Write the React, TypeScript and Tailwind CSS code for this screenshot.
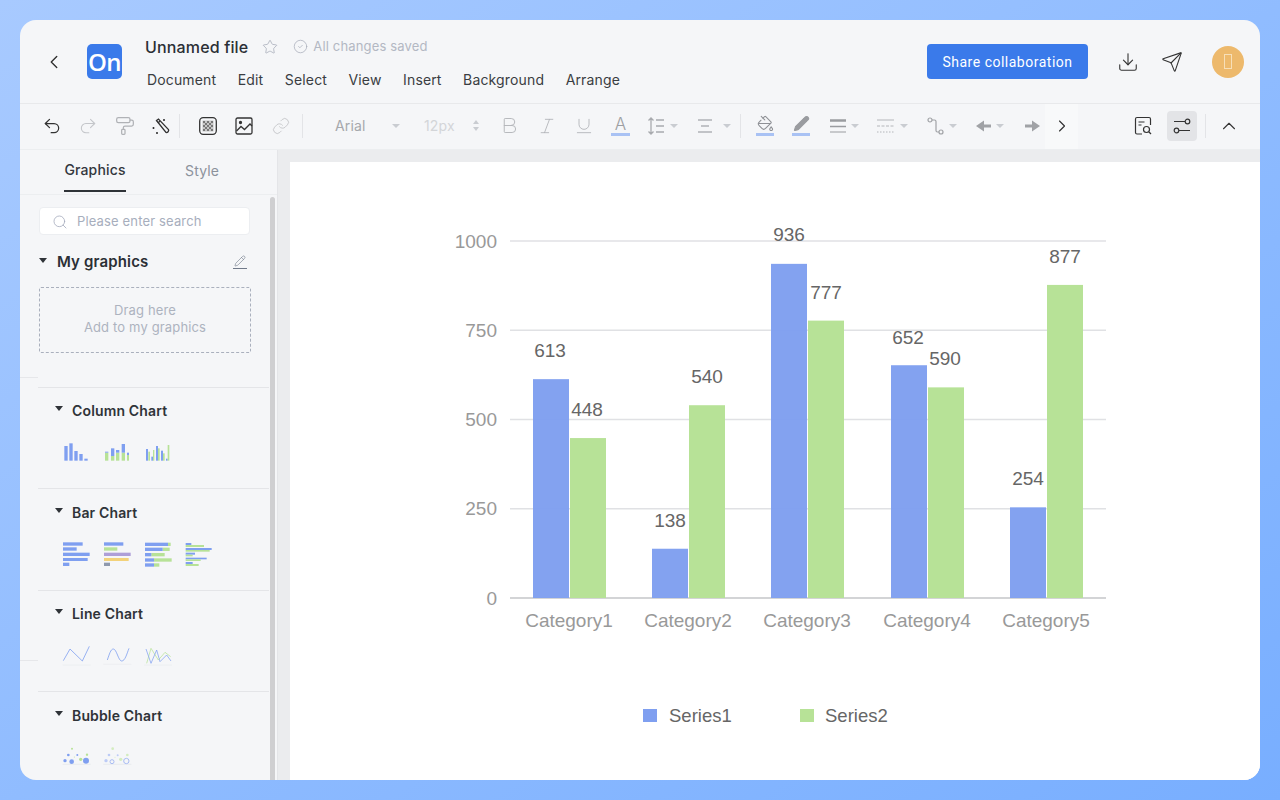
import { ChevronLeft, ChevronRight, ChevronUp, Star, CircleCheck, Download, Send, Undo2, Redo2, PaintRoller, Link, Bold, Italic, Underline, PaintBucket, Search, Pencil } from 'lucide-react'

const BLUE = '#7f9ff0'
const GREEN = '#b7e297'

const DATA = [
  { name: 'Category1', a: 613, b: 448, x: 533, la: [550, 357], lb: [587, 416] },
  { name: 'Category2', a: 138, b: 540, x: 652, la: [670, 527], lb: [707, 383] },
  { name: 'Category3', a: 936, b: 777, x: 771, la: [789, 241], lb: [826, 299] },
  { name: 'Category4', a: 652, b: 590, x: 891, la: [908, 344], lb: [945, 365] },
  { name: 'Category5', a: 254, b: 877, x: 1010, la: [1028, 485], lb: [1065, 263] },
]

const Caret = ({ className = '' }: { className?: string }) => (
  <span className={`block w-0 h-0 border-x-[4px] border-x-transparent border-t-[4px] border-t-[#c9ccd1] ${className}`} />
)

const DarkCaret = ({ className = '' }: { className?: string }) => (
  <span className={`block w-0 h-0 border-x-[4.5px] border-x-transparent border-t-[5px] border-t-[#2f3338] ${className}`} />
)

const Sep = ({ className = '' }: { className?: string }) => <span className={`block w-px h-[24px] bg-[#e3e4e7] ${className}`} />

function Column1() {
  return (
    <svg width="26" height="20" viewBox="39 33 78 60" fill={BLUE}>
      <rect x="43" y="48" width="10" height="44" /><rect x="58" y="40" width="10" height="52" /><rect x="73" y="63" width="10" height="29" /><rect x="88" y="72" width="10" height="20" /><rect x="103" y="86" width="10" height="6" />
    </svg>
  )
}

function Column2() {
  return (
    <svg width="26" height="20" viewBox="159 33 78 60">
      <g fill={GREEN}><rect x="165" y="68" width="10" height="24" /><rect x="183" y="78" width="10" height="14" /><rect x="198" y="68" width="10" height="24" /><rect x="215" y="68" width="10" height="24" /><rect x="231" y="75" width="10" height="17" /></g>
      <g fill={BLUE}><rect x="165" y="65" width="10" height="3" /><rect x="183" y="55" width="10" height="23" /><rect x="198" y="60" width="10" height="8" /><rect x="215" y="42" width="10" height="26" /><rect x="231" y="68" width="10" height="7" /></g>
    </svg>
  )
}

function Column3() {
  return (
    <svg width="26" height="20" viewBox="279 33 78 60" className="overflow-visible">
      <g fill={BLUE}><rect x="288" y="57" width="6" height="35" /><rect x="304" y="80" width="5" height="12" /><rect x="318" y="48" width="6" height="44" /><rect x="333" y="62" width="6" height="30" /><rect x="348" y="86" width="5" height="6" /></g>
      <g fill={GREEN}><rect x="295" y="65" width="5" height="27" /><rect x="309" y="60" width="4" height="32" /><rect x="324" y="55" width="5" height="37" /><rect x="339" y="70" width="5" height="22" /><rect x="353" y="45" width="5" height="47" /></g>
    </svg>
  )
}

function Bar1() {
  return (
    <svg width="26" height="20" viewBox="39 36 78 60" fill={BLUE} className="overflow-visible">
      <rect x="39" y="37" width="59" height="10" /><rect x="39" y="52" width="41" height="10" /><rect x="39" y="68" width="80" height="10" /><rect x="39" y="84" width="74" height="9" /><rect x="39" y="98" width="19" height="10" />
    </svg>
  )
}

function Bar2() {
  return (
    <svg width="26" height="20" viewBox="159 36 78 60" className="overflow-visible">
      <rect x="162" y="37" width="58" height="10" fill={BLUE} /><rect x="162" y="52" width="40" height="10" fill={GREEN} /><rect x="162" y="68" width="80" height="10" fill="#ae9fd8" /><rect x="162" y="84" width="74" height="9" fill="#f3d27a" /><rect x="162" y="98" width="18" height="10" fill="#8f99ad" />
    </svg>
  )
}

function Bar3() {
  return (
    <svg width="26" height="20" viewBox="279 36 78 60" className="overflow-visible">
      <g fill={GREEN}><rect x="354" y="38" width="8" height="10" /><rect x="338" y="53" width="21" height="10" /><rect x="304" y="69" width="40" height="10" /><rect x="312" y="85" width="53" height="10" /><rect x="312" y="100" width="16" height="10" /></g>
      <g fill={BLUE}><rect x="285" y="38" width="69" height="10" /><rect x="285" y="53" width="53" height="10" /><rect x="285" y="69" width="19" height="10" /><rect x="285" y="85" width="27" height="10" /><rect x="285" y="100" width="27" height="10" /></g>
    </svg>
  )
}

function Bar4() {
  return (
    <svg width="26" height="20" viewBox="399 36 78 60" className="overflow-visible">
      <g fill={BLUE}><rect x="407" y="39" width="17" height="6" /><rect x="407" y="54" width="78" height="6" /><rect x="407" y="68" width="28" height="6" /><rect x="407" y="83" width="63" height="5" /><rect x="407" y="96" width="21" height="6" /></g>
      <g fill={GREEN}><rect x="407" y="45" width="55" height="6" /><rect x="407" y="60" width="72" height="5" /><rect x="407" y="74" width="21" height="5" /><rect x="407" y="88" width="45" height="5" /><rect x="407" y="102" width="39" height="6" /></g>
    </svg>
  )
}

function Line1() {
  return (
    <svg width="26" height="20" viewBox="39 27 78 60" fill="none" className="overflow-visible">
      <path d="M38 90h84" stroke="#e9ebee" strokeWidth="2" /><path d="M40 77L60 42L97 78L118 34" stroke={BLUE} strokeWidth="2.4" />
    </svg>
  )
}

function Line2() {
  return (
    <svg width="26" height="20" viewBox="159 27 78 60" fill="none" className="overflow-visible">
      <path d="M160 88h84" stroke="#e9ebee" strokeWidth="2" /><path d="M172 75C178 58 182 42 190 42C200 42 205 78 215 78C225 78 230 58 237 40" stroke={BLUE} strokeWidth="2.4" />
    </svg>
  )
}

function Line3() {
  return (
    <svg width="26" height="20" viewBox="279 27 78 60" fill="none" className="overflow-visible">
      <path d="M282 90h84" stroke="#e9ebee" strokeWidth="2" /><path d="M290 85L303 40L325 75L345 52L362 65" stroke={GREEN} strokeWidth="2.2" /><path d="M288 42L303 85L320 45L330 80L350 60L363 78" stroke={BLUE} strokeWidth="2.2" />
    </svg>
  )
}

function Bubble1() {
  return (
    <svg width="26" height="20" viewBox="39 333 78 60" className="overflow-visible">
      <path d="M38 391h84" stroke="#e3e6ea" strokeWidth="2" />
      <g fill={GREEN}><circle cx="66" cy="344" r="3" /><circle cx="111" cy="362" r="3.5" /><circle cx="92" cy="376" r="5" /><circle cx="73" cy="369" r="1.5" /></g>
      <g fill={BLUE}><circle cx="45" cy="380" r="5" /><circle cx="65" cy="383" r="7" /><circle cx="108" cy="380" r="9" /><circle cx="55" cy="363" r="4" /><circle cx="82" cy="363" r="3" /></g>
    </svg>
  )
}

function Bubble2() {
  return (
    <svg width="26" height="20" viewBox="159 333 78 60" fill="none" className="overflow-visible">
      <path d="M160 391h84" stroke="#e3e6ea" strokeWidth="2" />
      <g fill="#d3ecbf"><circle cx="188" cy="344" r="4" /><circle cx="232" cy="363" r="4" /><circle cx="212" cy="376" r="5" /><circle cx="195" cy="370" r="1.5" /></g>
      <g fill="#bccbf6"><circle cx="168" cy="380" r="5" /><circle cx="177" cy="363" r="4" /><circle cx="203" cy="364" r="3" /></g>
      <g stroke="#a9bcf3" strokeWidth="3"><circle cx="186" cy="383" r="6" /><circle cx="229" cy="381" r="8" /></g>
    </svg>
  )
}

const SECTIONS = [
  { title: 'Column Chart', h: 'h-[101px]', top: 'mt-[12px] mb-[21px]', thumbs: [Column1, Column2, Column3] },
  { title: 'Bar Chart', h: 'h-[102px]', top: 'mt-[13px] mb-[20px]', thumbs: [Bar1, Bar2, Bar3, Bar4] },
  { title: 'Line Chart', h: 'h-[101px]', top: 'mt-[12px] mb-[21px]', thumbs: [Line1, Line2, Line3] },
  { title: 'Bubble Chart', h: 'h-[102px]', top: 'mt-[13px] mb-[20px]', thumbs: [Bubble1, Bubble2] },
]

function Toolbar() {
  return (
    <div className="h-[46px] shrink-0 flex items-center pl-[14px] pr-[14px] pb-[2px] border-b border-[#eceef0] text-[#b4b6ba]">
      <span className="w-[36px] flex justify-center text-[#333]"><Undo2 size={20} strokeWidth={1.5} /></span>
      <span className="w-[36px] flex justify-center"><Redo2 size={20} strokeWidth={1.3} className="text-[#c4c6ca]" /></span>
      <span className="w-[37px] flex justify-center"><PaintRoller size={20} strokeWidth={1.5} className="text-[#b0b2b6]" /></span>
      <span className="w-[36px] flex justify-center text-[#333]">
        <svg width="20" height="20" viewBox="0 0 20 20" fill="none" stroke="currentColor" strokeWidth="1.3">
          <path d="M5.5 4.5L7.5 3L17.5 13.5C18.2 15 16.5 17 15 16.5Z" /><path d="M7 7l2-2" />
          <path d="M13 3v2M2.5 11v2M6 16v2" strokeWidth="1.6" />
        </svg>
      </span>
      <Sep className="mr-[10px]" />
      <span className="w-[36px] flex justify-center">
        <svg width="18" height="18" viewBox="0 0 18 18" fill="none">
          <rect x="0.7" y="0.7" width="16.6" height="16.6" rx="3.5" stroke="#333" strokeWidth="1.3" />
          <path d="M3.5 3.5h11v11h-11z" fill="#c6c6c6" />
          <path d="M4 4h2v2H4zM8 4h2v2H8zM12 4h2v2h-2zM6 6h2v2H6zM10 6h2v2h-2zM4 8h2v2H4zM8 8h2v2H8zM12 8h2v2h-2zM6 10h2v2H6zM10 10h2v2h-2zM4 12h2v2H4zM8 12h2v2H8zM12 12h2v2h-2z" fill="#777" />
        </svg>
      </span>
      <span className="w-[35px] flex justify-center">
        <svg width="18" height="18" viewBox="0 0 18 18" fill="none" stroke="#333" strokeWidth="1.3">
          <rect x="1" y="1" width="16" height="16" rx="1.5" /><circle cx="5.5" cy="5.5" r="1" fill="#333" /><path d="M1.5 14L6 9.5L9.5 12.5L15 7L17 9" />
        </svg>
      </span>
      <span className="w-[39px] flex justify-center"><Link size={18} strokeWidth={1.3} className="text-[#c8cacd]" /></span>
      <Sep className="ml-[2px]" />
      <span className="ml-[32px] w-[32px] text-[14px] text-[#a6a8ac]">Arial</span>
      <Caret className="ml-[25px]" />
      <span className="ml-[24px] w-[33px] text-[14px] text-[#d3d5d8]">12px</span>
      <span className="ml-[16px] w-[8px] flex flex-col gap-[3px]">
        <span className="block w-0 h-0 border-x-[3.5px] border-x-transparent border-b-[4px] border-b-[#c9ccd1]" />
        <span className="block w-0 h-0 border-x-[3.5px] border-x-transparent border-t-[4px] border-t-[#c9ccd1]" />
      </span>
      <span className="ml-[10px] w-[37px] flex justify-center"><Bold size={21} strokeWidth={1.1} /></span>
      <span className="w-[37px] flex justify-center"><Italic size={20} strokeWidth={1.1} /></span>
      <span className="w-[37px] flex justify-center"><Underline size={20} strokeWidth={1.1} /></span>
      <span className="w-[37px] flex flex-col items-center">
        <span className="h-[18px] text-[17px] leading-[18px] font-light text-[#9c9ea2]">A</span>
        <span className="block w-[19px] h-[3px] bg-[#a9c2f4]" />
      </span>
      <svg className="ml-[8px]" width="18" height="18" viewBox="0 0 18 18" fill="none" stroke="#a8aaae" strokeWidth="1.3">
        <path d="M4 1v16M1.5 3.5L4 1l2.5 2.5M1.5 14.5L4 17l2.5-2.5M9 3h8M9 9h8M9 15h8" />
      </svg>
      <Caret className="ml-[5px]" />
      <svg className="ml-[19px]" width="16" height="16" viewBox="0 0 16 16" fill="none" stroke="#b0b2b6" strokeWidth="1.3">
        <path d="M1 2h14M4 8h8M1 14h14" />
      </svg>
      <Caret className="ml-[10px]" />
      <Sep className="ml-[9px]" />
      <span className="ml-[15px] w-[18px] flex flex-col items-center">
        <PaintBucket size={17} strokeWidth={1.5} className="text-[#8f9196]" />
        <span className="block w-[18px] h-[3px] mt-[1px] bg-[#a9c2f4]" />
      </span>
      <span className="ml-[18px] w-[18px] flex flex-col items-center">
        <Pencil size={17} strokeWidth={1.5} fill="#9a9ca0" className="text-[#9a9ca0]" />
        <span className="block w-[18px] h-[3px] mt-[1px] bg-[#a9c2f4]" />
      </span>
      <svg className="ml-[20px]" width="16" height="16" viewBox="0 0 16 16" fill="none" stroke="#9a9ca0">
        <path d="M0 2.5h16" strokeWidth="2.6" /><path d="M0 8.5h16" strokeWidth="1.7" /><path d="M0 14h16" strokeWidth="1" />
      </svg>
      <Caret className="ml-[5px]" />
      <svg className="ml-[18px]" width="17" height="16" viewBox="0 0 17 16" fill="none" stroke="#b4b6ba" strokeWidth="1">
        <path d="M0 2h17" /><path d="M0 8h17" strokeDasharray="3 1.5" /><path d="M0 14h17" strokeDasharray="1.5 1.5" />
      </svg>
      <Caret className="ml-[6px]" />
      <svg className="ml-[19px]" width="17" height="18" viewBox="0 0 17 18" fill="none" stroke="#a0a2a6" strokeWidth="1.2">
        <circle cx="3" cy="3" r="2" /><circle cx="14" cy="15" r="2" /><path d="M5 3h2.5c1 0 1.5.5 1.5 1.5V13.5c0 1 .5 1.5 1.5 1.5H12" />
      </svg>
      <Caret className="ml-[5px]" />
      <svg className="ml-[19px]" width="15" height="12" viewBox="0 0 15 12" fill="#a0a2a6">
        <path d="M0 6L8 .5V4.500H15V7.500H8V11.500z" />
      </svg>
      <Caret className="ml-[5px]" />
      <svg className="ml-[21px]" width="15" height="12" viewBox="0 0 15 12" fill="#a0a2a6">
        <path d="M15 6L7 .5V4.500H0V7.500H7V11.500z" />
      </svg>
      <span className="ml-[5px] w-[33px] h-[45px] -mb-[2px] pb-[2px] flex items-center justify-center bg-[#f8f9fa] text-[#333]"><ChevronRight size={20} strokeWidth={1.4} /></span>
      <span className="ml-auto w-[30px] flex justify-center text-[#333]">
        <svg width="18" height="20" viewBox="0 0 18 20" fill="none" stroke="currentColor" strokeWidth="1.2">
          <path d="M8 18H3C2 18 1.500 17.500 1.500 16.500V3C1.500 2 2 1.500 3 1.500H15C16 1.500 16.500 2 16.500 3V9" />
          <path d="M4.500 6h6M4.500 9h3" /><circle cx="12.500" cy="13.500" r="3" /><path d="M15 16l2 2" />
        </svg>
      </span>
      <span className="ml-[9px] w-[30px] h-[30px] rounded-[4px] bg-[#e3e4e7] flex items-center justify-center text-[#333]">
        <svg width="20" height="20" viewBox="0 0 20 20" fill="none" stroke="currentColor" strokeWidth="1.2">
          <path d="M2 5.500h11" /><circle cx="15.500" cy="5.500" r="2.300" /><circle cx="4.500" cy="14.500" r="2.300" /><path d="M7 14.500h11" />
        </svg>
      </span>
      <Sep className="ml-[8px]" />
      <span className="ml-[12px] mr-[6px] text-[#333]"><ChevronUp size={22} strokeWidth={1.2} /></span>
    </div>
  )
}

function Sidebar() {
  return (
    <div className="w-[258px] shrink-0 relative overflow-hidden border-r border-[#e4e5e8]">
      <div className="h-[45px] flex items-stretch border-b border-[#eceef0]">
        <div className="ml-[44px] w-[62px] h-[42px] pb-[2px] flex items-center justify-center border-b-2 border-[#2f3338] text-[14px] font-medium text-[#33373d]">Graphics</div>
        <div className="ml-[59px] h-[40px] flex items-center text-[14px] text-[#8c929c]">Style</div>
      </div>
      <div className="absolute left-[250px] top-[47px] w-[5px] h-[600px] rounded-full bg-[#cfcfd1]" />
      <div className="absolute left-0 top-[227px] w-[18px] h-px bg-[#e6e7ea]" />
      <div className="absolute left-0 top-[510px] w-[18px] h-px bg-[#e6e7ea]" />
      <div className="pl-[18px] w-[249px]">
        <div className="ml-px mt-[12px] w-[211px] h-[28px] pt-px flex items-center bg-white border border-[#eceef1] rounded-[4px]">
          <Search size={16} strokeWidth={1.2} className="ml-[12px] text-[#a3aabb]" />
          <span className="ml-[9px] text-[13px] text-[#a7aebd]">Please enter search</span>
        </div>
        <div className="mt-[16px] h-[22px] flex items-center">
          <DarkCaret className="ml-px -mt-[4px]" />
          <span className="ml-[10px] text-[15px] font-semibold text-[#2b2f35]">My graphics</span>
          <span className="ml-auto mr-[22px] flex flex-col items-center text-[#717a8a]">
            <Pencil size={12} strokeWidth={1.2} />
            <span className="block w-[14px] h-px mt-px bg-[#717a8a]" />
          </span>
        </div>
        <div className="ml-px mt-[14px] w-[212px] h-[66px] pb-[2px] flex flex-col items-center justify-center border border-dashed border-[#aab0bd] rounded-[2px] text-[13px] leading-[17px] text-[#adb3bf]">
          <span>Drag here</span>
          <span>Add to my graphics</span>
        </div>
        <div className="mt-[34px]">
          {SECTIONS.map(s => (
            <div key={s.title} className={`${s.h} border-t border-[#e4e5e8]`}>
              <div className={`${s.top} h-[20px] flex items-center pl-[17px]`}>
                <DarkCaret className="-mt-[4px]" />
                <span className="ml-[9px] text-[14px] font-semibold text-[#2f3338]">{s.title}</span>
              </div>
              <div className="flex gap-[14px] pl-[25px]">
                {s.thumbs.map((T, i) => <T key={i} />)}
              </div>
            </div>
          ))}
        </div>
      </div>
    </div>
  )
}

function Chart() {
  return (
    <svg className="block tracking-normal" width="970" height="618" viewBox="290 162 970 618" fontFamily="'Liberation Sans', Arial, sans-serif" fontSize="19">
      {[0, 250, 500, 750, 1000].map(v => {
        const y = 598 - v * 0.357
        return (
          <g key={v}>
            <path d={`M510 ${y}H1106`} stroke={v === 0 ? '#c4c6c9' : '#e0e1e4'} strokeWidth="1.5" />
            <text x="497" y={y + 6.5} textAnchor="end" fill="#999">{v}</text>
          </g>
        )
      })}
      {DATA.map(d => (
        <g key={d.name}>
          <rect x={d.x + 37} y={598 - d.b * 0.357} width="36" height={d.b * 0.357} fill={GREEN} />
          <rect x={d.x} y={598 - d.a * 0.357} width="36" height={d.a * 0.357} fill={BLUE} fillOpacity="0.97" />
          <text x={d.la[0]} y={d.la[1]} textAnchor="middle" fill="#666">{d.a}</text>
          <text x={d.lb[0]} y={d.lb[1]} textAnchor="middle" fill="#666">{d.b}</text>
          <text x={d.x + 36} y="627" textAnchor="middle" fill="#999">{d.name}</text>
        </g>
      ))}
      <rect x="643" y="709" width="14" height="13" fill={BLUE} />
      <text x="669" y="722" fontSize="18.5" fill="#666">Series1</text>
      <rect x="800" y="709" width="14" height="13" fill={GREEN} />
      <text x="825" y="722" fontSize="18.5" fill="#666">Series2</text>
    </svg>
  )
}

export default function App() {
  return (
    <div className="h-screen w-screen p-5 bg-linear-to-br from-[#a8caff] to-[#78aeff] font-['Inter',sans-serif] tracking-[0.15px]">
      <div className="h-full rounded-[16px] overflow-hidden bg-[#f5f6f8] flex flex-col">
        {/* Header */}
        <div className="h-[84px] shrink-0 flex items-center border-b border-[#e8e9eb]">
          <ChevronLeft size={22} strokeWidth={1.5} className="ml-[23px] text-[#333]" />
          <div className="ml-[22px] w-[35px] h-[35px] rounded-[5px] bg-[#3a7aea] flex items-center justify-center text-white text-[24px] tracking-[-0.5px] font-['Open_Sans',sans-serif] font-semibold">On</div>
          <div className="ml-[23px] pt-[1px]">
            <div className="flex items-center h-[24px]">
              <span className="text-[16px] font-medium text-[#2b2f35]">Unnamed file</span>
              <Star size={16} strokeWidth={1.2} className="ml-[14px] text-[#a9afbb]" />
              <CircleCheck size={15} strokeWidth={1.2} className="ml-[15px] text-[#a9afbb]" />
              <span className="ml-[5px] text-[13px] text-[#b3b8c3]">All changes saved</span>
            </div>
            <div className="mt-[10px] ml-[2px] flex gap-[21.5px] text-[14px] text-[#3a3d42]">
              <span>Document</span><span>Edit</span><span>Select</span><span>View</span><span>Insert</span><span>Background</span><span>Arrange</span>
            </div>
          </div>
          <div className="ml-auto w-[161px] h-[35px] pt-px rounded-[4px] bg-[#3a7aea] flex items-center justify-center text-white text-[14px] font-['Roboto',sans-serif] tracking-[0.5px]">Share collaboration</div>
          <Download size={22} strokeWidth={1.2} className="ml-[29px] text-[#333]" />
          <Send size={22} strokeWidth={1.2} className="ml-[22px] text-[#333]" />
          <div className="ml-[29px] mr-[16px] w-[32px] h-[32px] rounded-full bg-[#edb96c] flex items-center justify-center">
            <span className="block w-[8px] h-[15px] border border-[#f7dfb8]" />
          </div>
        </div>
        <Toolbar />
        <div className="flex-1 flex min-h-0">
          <Sidebar />
          <div className="flex-1 bg-[#ebecee] pl-[12px] pt-[12px] overflow-hidden">
            <div className="bg-white h-full"><Chart /></div>
          </div>
        </div>
      </div>
    </div>
  )
}
